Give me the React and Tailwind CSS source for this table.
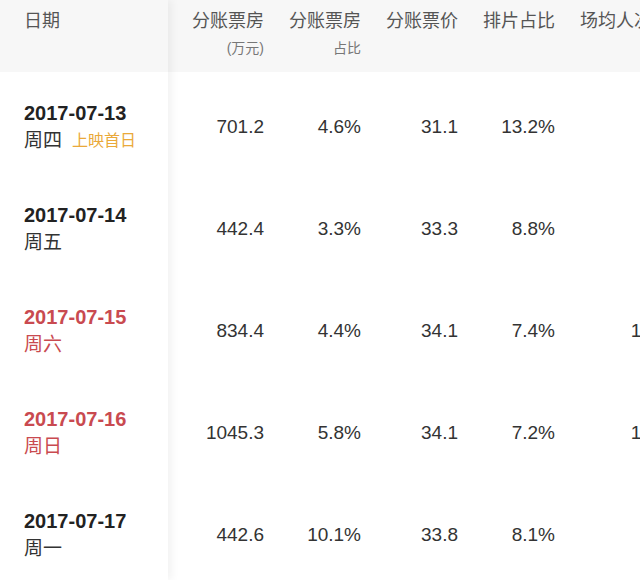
import React from "react";

const rows = [
  { date: "2017-07-13", wd: "周四", tag: "上映首日", red: false, v: ["701.2", "4.6%", "31.1", "13.2%", "9"] },
  { date: "2017-07-14", wd: "周五", red: false, v: ["442.4", "3.3%", "33.3", "8.8%", "8"] },
  { date: "2017-07-15", wd: "周六", red: true, v: ["834.4", "4.4%", "34.1", "7.4%", "16"] },
  { date: "2017-07-16", wd: "周日", red: true, v: ["1045.3", "5.8%", "34.1", "7.2%", "19"] },
  { date: "2017-07-17", wd: "周一", red: false, v: ["442.6", "10.1%", "33.8", "8.1%", "7"] },
];

const headers = [
  { t: "分账票房", s: "(万元)", w: "w-[108px]" },
  { t: "分账票房", s: "占比", w: "w-[97px]" },
  { t: "分账票价", w: "w-[97px]" },
  { t: "排片占比", w: "w-[97px]" },
  { t: "场均人次", w: "w-[97px]" },
];

const font = { fontFamily: '"Liberation Sans", "Noto Sans CJK SC", sans-serif' };

export default function App() {
  return (
    <div className="w-[640px] h-[580px] overflow-hidden bg-white flex" style={font}>
      <div className="w-[168px] shrink-0 relative z-10 bg-white shadow-[4px_0_8px_rgba(0,0,0,0.05)]">
        <div className="h-[72px] bg-[#f7f7f7] pt-[9px] pl-[24px] text-[18px] leading-[24px] text-[#555]">日期</div>
        <div className="pt-[4px]">
          {rows.map((r, i) => (
            <div key={i} className="h-[102px] flex flex-col justify-center pl-[24px]">
              <div className={`text-[20px] font-bold leading-[28px] ${r.red ? "text-[#c94a50]" : "text-[#222]"}`}>{r.date}</div>
              <div className="flex items-center leading-[28px]">
                <span className={`text-[19px] ${r.red ? "text-[#c94a50]" : "text-[#333]"}`}>{r.wd}</span>
                {r.tag && <span className="text-[16px] ml-[10px] text-[#eaa93a]">{r.tag}</span>}
              </div>
            </div>
          ))}
        </div>
      </div>
      <div className="flex-1 overflow-hidden">
        <div className="h-[72px] bg-[#f7f7f7] flex w-[500px]">
          {headers.map((h, i) => (
            <div key={i} className={`${h.w} shrink-0 pr-3 pt-[9px] flex flex-col items-end`}>
              <div className="text-[18px] leading-[24px] text-[#555] whitespace-nowrap">{h.t}</div>
              {h.s && <div className="text-[14px] leading-[18px] mt-[6px] text-[#777]">{h.s}</div>}
            </div>
          ))}
        </div>
        <div className="pt-[4px] w-[500px]">
          {rows.map((r, i) => (
            <div key={i} className="h-[102px] flex items-center">
              {r.v.map((v, j) => (
                <div key={j} className={`${headers[j].w} shrink-0 pr-3 text-right text-[19px] text-[#333]`}>{v}</div>
              ))}
            </div>
          ))}
        </div>
      </div>
    </div>
  );
}
